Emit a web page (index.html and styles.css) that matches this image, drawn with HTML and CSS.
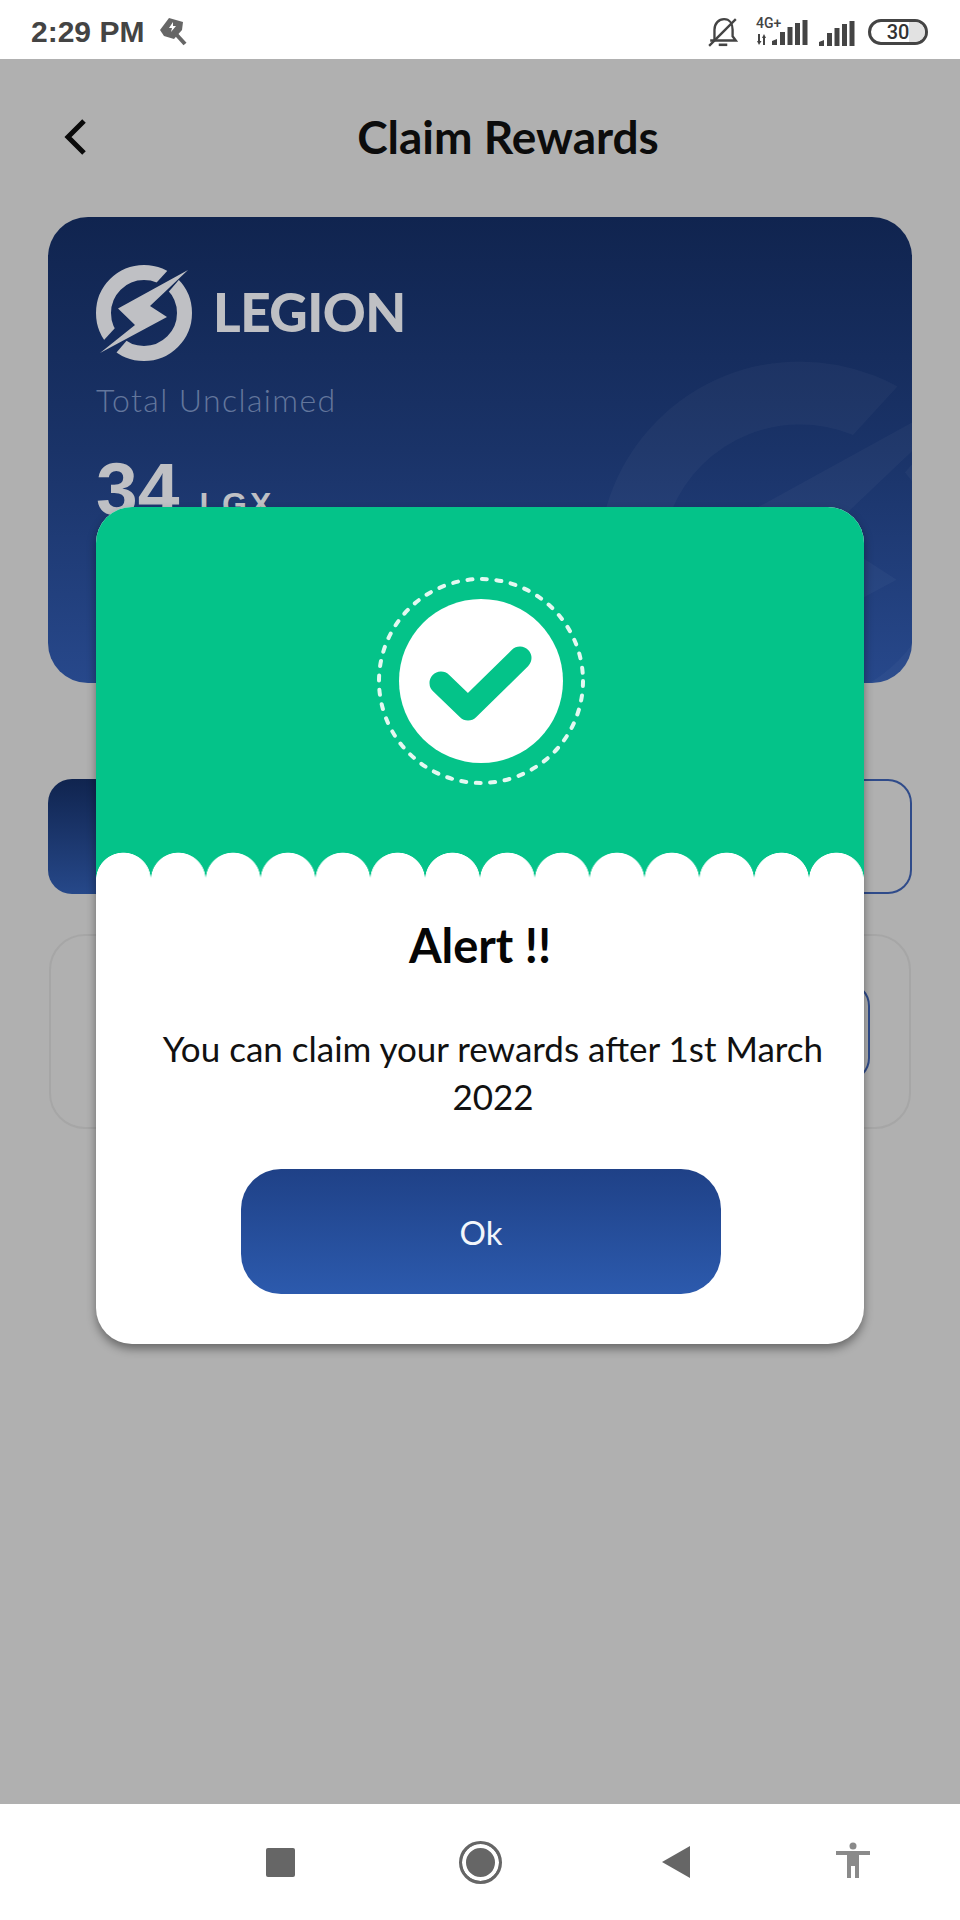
FILE: index.html
```html
<!DOCTYPE html>
<html lang="en">
<head>
<meta charset="utf-8">
<title>Claim Rewards</title>
<link rel="stylesheet" href="styles.css">
</head>
<body>
<div class="phone">
  <svg class="defs" width="0" height="0">
    <defs>
      <mask id="ring-cut" maskUnits="userSpaceOnUse" x="-60" y="-70" width="120" height="140">
        <rect x="-60" y="-70" width="120" height="140" fill="#fff"/>
        <path fill="#000" d="M41 -61.500L49 -49.500L-43 57.500L-56 44.500Z"/>
      </mask>
      <g id="legion-mark">
        <circle cx="0" cy="0" r="40.500" fill="none" stroke="currentColor" stroke-width="15" mask="url(#ring-cut)"/>
        <path fill="currentColor" d="M44 -43L-26 -4.500L-9 12L-44 40L23 4L6 -7Z"/>
      </g>
    </defs>
  </svg>

  <header class="status">
    <div class="status-left">
      <span class="time">2:29 PM</span>
      <svg class="hammer" width="28" height="30" viewBox="0 0 28 30"><path fill="#666" d="M0 14L9 2l14 4-1 8-8 9-10-3z"/><path d="M15 17l10 11" stroke="#666" stroke-width="4" fill="none"/><path fill="#fff" d="M13 6l-4 6 3 0-1 4 5-6-3 0z"/></svg>
    </div>
    <div class="status-right">
      <svg width="32" height="32" viewBox="0 0 30 30"><path fill="none" stroke="#444" stroke-width="2.200" d="M7 23V13c0-6 4-10 9-10s8 4 8 10v6l3 4H3"/><path d="M11 27h8" stroke="#444" stroke-width="2.400"/><path d="M27 3L2 28" stroke="#444" stroke-width="2.200"/></svg>
      <div class="net">
        <span class="net-label">4G+</span>
        <svg class="net-arrows" width="9" height="11" viewBox="0 0 9 11"><path fill="#444" d="M1 0h2v7h1.500L2 11 0 7h1zM6 11h2V4h1L7 0 5 4h1z"/></svg>
        <svg class="net-bars" width="36" height="26" viewBox="0 0 36 26"><path fill="#444" d="M0 26v-4l5-2v6zM8 26V13h5v13zM15.500 26V8h5v18zM23 26V4h5v22zM30.500 26V1h5v25z"/></svg>
      </div>
      <svg class="bars-b" width="36" height="26" viewBox="0 0 36 26"><path fill="#444" d="M0 26v-4l5-2v6zM8 26V13h5v13zM15.500 26V8h5v18zM23 26V4h5v22zM30.500 26V1h5v25z"/></svg>
      <div class="battery"><span class="battery-fill"></span><span class="battery-text">30</span></div>
    </div>
  </header>

  <main class="screen">
    <div class="topbar">
      <button class="back" aria-label="Back">
        <svg width="24" height="38" viewBox="0 0 24 38"><path d="M21 3L5 19l16 16" fill="none" stroke="#0a0a0a" stroke-width="5"/></svg>
      </button>
      <h1 class="page-title">Claim Rewards</h1>
    </div>

    <section class="balance-card">
      <svg class="watermark" width="420" height="420" viewBox="-50 -50 100 100"><use href="#legion-mark"/></svg>
      <div class="brand">
        <svg class="brand-mark" width="96" height="96" viewBox="-48 -48 96 96"><use href="#legion-mark"/></svg>
        <span class="brand-name">LEGION</span>
      </div>
      <div class="balance-label">Total Unclaimed</div>
      <div class="balance-value"><span class="amount">34</span><span class="unit">LGX</span></div>
    </section>

    <div class="tabs">
      <div class="tab tab-active"></div>
      <div class="tab tab-outline"></div>
    </div>

    <section class="claim-box">
      <div class="claim-button"></div>
    </section>

    <div class="modal">
      <div class="modal-head">
        <svg class="seal" width="212" height="212" viewBox="0 0 212 212">
          <circle cx="106" cy="106" r="102" fill="none" stroke="#e4f8f1" stroke-width="4" stroke-dasharray="5 9.570" stroke-linecap="round"/>
          <circle cx="106" cy="106" r="82" fill="#fff"/>
          <path d="M66 108l27 26 52-51" fill="none" stroke="#04c389" stroke-width="23" stroke-linecap="round" stroke-linejoin="round"/>
        </svg>
        <div class="scallops"></div>
      </div>
      <div class="modal-body">
        <h2 class="modal-title">Alert !!</h2>
        <p class="modal-text">You can claim your rewards after 1st March 2022</p>
        <button class="ok">Ok</button>
      </div>
    </div>
  </main>

  <nav class="navbar">
    <span class="nav-square"></span>
    <span class="nav-home"></span>
    <svg class="nav-back" width="28" height="32" viewBox="0 0 28 32"><path fill="#666" d="M28 0v32L0 16z"/></svg>
    <svg class="nav-a11y" width="34" height="36" viewBox="0 0 34 36"><circle cx="17" cy="4" r="3.500" fill="#8a8a8a"/><path fill="#8a8a8a" d="M0 9h34v4H23v23h-4V24h-4v12h-4V13H0z"/></svg>
  </nav>
</div>
</body>
</html>
```
FILE: styles.css
```css
* { box-sizing: border-box; }
html, body { margin: 0; padding: 0; }
body { width: 960px; height: 1920px; overflow: hidden; font-family: "Lato", "Liberation Sans", sans-serif; }
.phone { width: 960px; height: 1920px; display: flex; flex-direction: column; background: #b0b0b0; }
.defs { position: absolute; }

.status { height: 59px; background: #fff; display: flex; justify-content: space-between; align-items: center; padding: 4px 32px 0 31px; flex: none; }
.status-left { display: flex; align-items: center; gap: 16px; }
.time { font: 700 30px "Liberation Sans", sans-serif; color: #444; }
.hammer { margin-top: -2px; }
.status-right { display: flex; align-items: center; }
.net { position: relative; width: 52px; height: 30px; margin-left: 16px; }
.net-label { position: absolute; left: 1px; top: -1px; font: 500 14px/14px "Roboto", sans-serif; color: #444; }
.net-arrows { position: absolute; left: 2px; top: 17px; }
.net-bars { position: absolute; left: 17px; top: 2px; }
.bars-b { margin: 2px 0 0 12px; }
.battery { position: relative; width: 60px; height: 26px; margin-left: 13px; border: 3px solid #444; border-radius: 13px; display: flex; align-items: center; justify-content: center; overflow: hidden; }
.battery-fill { position: absolute; right: 0; top: 0; bottom: 0; width: 16px; background: #e2e2e2; }
.battery-text { position: relative; font: 500 20px "Roboto", sans-serif; color: #333; }

.screen { flex: 1; position: relative; padding: 1px 48px 0; min-height: 0; }
.topbar { height: 157px; display: flex; align-items: center; }
.back { width: 56px; height: 60px; padding: 0 0 0 15px; border: 0; background: none; display: flex; align-items: center; margin-top: -4px; }
.page-title { flex: 1; margin: -4px 0 0; text-align: center; font: 700 46px "Lato", sans-serif; color: #0c0c0c; }

.balance-card { position: relative; height: 466px; border-radius: 40px; overflow: hidden; padding: 48px; background: linear-gradient(180deg, #10244f 0%, #1a3368 50%, #27488b 100%); }
.watermark { position: absolute; left: 542px; top: 136px; color: rgba(255,255,255,.03); }
.brand { display: flex; align-items: center; gap: 21px; }
.brand-mark { color: #bfc0c4; flex: none; overflow: visible; }
.brand-name { margin-top: -4px; font: 900 53px "Lato", sans-serif; color: #bfc0c4; letter-spacing: -.5px; }
.balance-label { margin-top: 19px; font: 300 32px "Lato", sans-serif; letter-spacing: 1.4px; color: #63769c; }
.balance-value { margin-top: 27px; display: flex; align-items: baseline; gap: 20px; color: #bfc0c4; font-family: "Liberation Sans", sans-serif; font-weight: 700; }
.amount { font-size: 75px; }
.unit { font-size: 32px; letter-spacing: 3px; }

.tabs { display: flex; margin-top: 96px; height: 115px; }
.tab { flex: 1; }
.tab-active { background: linear-gradient(180deg, #10244f, #264889); border-radius: 24px 0 0 24px; }
.tab-outline { border: 2px solid #2f4b8a; border-left: 0; border-radius: 0 24px 24px 0; }

.claim-box { margin: 40px 1px 0; height: 195px; border: 2px solid #a6a6a6; border-radius: 36px; padding: 46px 39px 0; display: flex; justify-content: flex-end; }
.claim-button { width: 300px; height: 100px; border: 2px solid #2f4b8a; border-radius: 24px; }

.modal { position: absolute; left: 96px; top: 448px; width: 768px; height: 837px; border-radius: 36px; background: #fff; overflow: hidden; box-shadow: 0 5px 10px rgba(0,0,0,.4); }
.modal-head { position: relative; height: 373px; background: #04c389; display: flex; justify-content: center; padding: 68px 0 0 2px; }
.scallops { position: absolute; left: 0; right: 0; bottom: 0; height: 28px; background: radial-gradient(circle at 27.43px 28px, #fff 27px, rgba(255,255,255,0) 27.7px) 0 0 / 54.857px 28px repeat-x; }
.modal-body { display: flex; flex-direction: column; align-items: center; }
.modal-title { margin: 33px 0 0; font: 700 47px/64px "Lato", sans-serif; color: #060606; }
.modal-text { margin: 47px 0 0; width: 690px; padding-left: 26px; text-align: center; font: 400 35px/48px "Lato", sans-serif; color: #111; }
.ok { margin: 49px 0 0 2px; width: 480px; height: 125px; border: 0; border-radius: 40px; background: linear-gradient(180deg, #1f4187, #2c5aad); color: #f2f6fb; font: 400 33px "Lato", sans-serif; }

.navbar { height: 116px; flex: none; background: #fff; display: flex; align-items: center; padding-left: 266px; }
.nav-square { width: 29px; height: 29px; background: #666; border-radius: 2px; }
.nav-home { margin-left: 164px; width: 43px; height: 43px; border-radius: 50%; background: #666; border: 3px solid #666; box-shadow: inset 0 0 0 4px #fff; }
.nav-back { margin-left: 160px; }
.nav-a11y { margin-left: 146px; margin-top: -4px; }
```
